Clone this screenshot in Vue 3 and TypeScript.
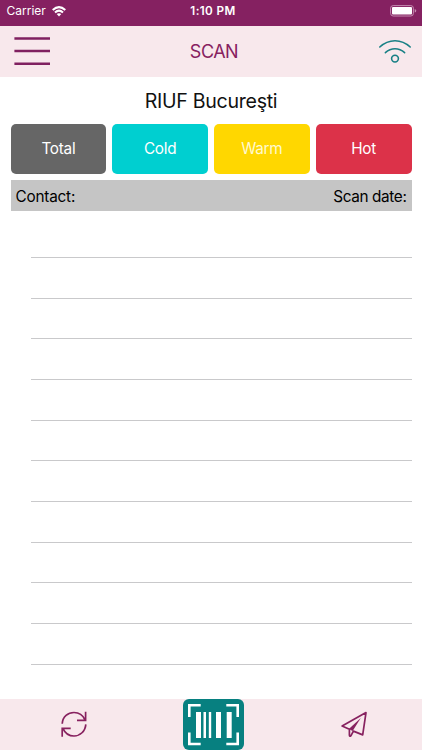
<script setup lang="ts">
interface Filter {
  label: string
  tone: string
}

const filters: Filter[] = [
  { label: 'Total', tone: 'total' },
  { label: 'Cold', tone: 'cold' },
  { label: 'Warm', tone: 'warm' },
  { label: 'Hot', tone: 'hot' },
]
const rowCount = 11
</script>

<template>
  <div class="screen">
    <div class="status">
      <div class="carrier">
        <span>Carrier</span>
        <svg width="14" height="11" viewBox="0 0 14 11" fill="none" stroke="#fff" stroke-width="2">
          <path d="M.7 4.1Q7-1.8 13.3 4.1M3 6.5Q7 2.8 11 6.5" />
          <path d="M4.7 8Q7 6.3 9.3 8L7 10.4Z" fill="#fff" stroke="none" />
        </svg>
      </div>
      <span class="clock">1:10 PM</span>
      <svg class="battery" width="27" height="12" viewBox="0 0 27 12">
        <rect x=".6" y=".6" width="22.8" height="10.4" rx="2.6" fill="none" stroke="#c58bb0" />
        <rect x="2" y="2" width="20" height="7.6" rx="1" fill="#fff" />
        <path d="M24.7 4Q26.3 4.4 26.3 5.8T24.7 7.6Z" fill="#c58bb0" />
      </svg>
    </div>

    <header class="header">
      <button class="menu" aria-label="Menu">
        <svg width="36" height="30" viewBox="0 0 36 30" stroke="#802060" stroke-width="2.5">
          <path d="M.4 2.4H36M.4 15.1H36M.4 27.8H36" />
        </svg>
      </button>
      <h1>SCAN</h1>
      <svg class="wifi" width="34" height="26" viewBox="0 0 34 26" fill="none" stroke="#188085" stroke-width="1.6" stroke-linecap="round">
        <path d="M1.8 9Q8.4 2.7 17 2.7T32.2 9M7.4 14.6Q11.7 10.8 17 10.8T26.6 14.6" />
        <circle cx="17" cy="20.6" r="3.4" />
      </svg>
    </header>

    <main class="content">
      <h2>RIUF Bucureşti</h2>
      <div class="filters">
        <button v-for="f in filters" :key="f.label" class="filter" :class="f.tone">{{ f.label }}</button>
      </div>
      <div class="list-head">
        <span>Contact:</span>
        <span class="date">Scan date:</span>
      </div>
      <ul class="rows">
        <li v-for="n in rowCount" :key="n" />
      </ul>
    </main>

    <footer class="footer">
      <button class="tab sync" aria-label="Refresh">
        <svg width="28" height="28" viewBox="0 0 28 28" fill="none" stroke="#87215f" stroke-width="1.7">
          <path d="M2.2 13.7C2.7 6.6 8 2.5 14 2.5C18.7 2.5 23 5.4 25 9.8M25.6 1.8V10.4H17" />
          <path d="M25.8 14.4C25.4 21.2 20 26 14 26C9.3 26 5 23 3 18.6M2.2 26.7V18.4H10.7" />
        </svg>
      </button>
      <button class="scan" aria-label="Scan barcode">
        <svg width="61" height="52" viewBox="0 0 61 52">
          <path d="M6.3 18V6.3H17.7M43.3 6.3H54.7V18M6.3 33.5V45H17.7M43.3 45H54.7V33.5" fill="none" stroke="#fff" stroke-width="2.6" />
          <path d="M13 13H18V39H13ZM20.5 13H23V39H20.5ZM25.8 13H28.2V39H25.8ZM33 13H38V39H33ZM43.7 13H48.7V39H43.7Z" fill="#fff" />
        </svg>
      </button>
      <button class="tab send" aria-label="Send">
        <svg width="28" height="28" viewBox="0 0 28 28" fill="none" stroke="#87215f" stroke-width="1.7" stroke-linejoin="round">
          <path d="M2.1 16L26 2.6L22.7 24.9L13.4 21.1L11 25.6Q9.6 27 9.4 25.1V19.2Z" />
          <path d="M8.8 19L20.8 8L12.6 21Z" fill="#87215f" stroke="none" />
        </svg>
      </button>
    </footer>
  </div>
</template>

<style>
body { margin: 0; overflow: hidden; }
</style>

<style scoped>
.screen {
  width: 422px;
  height: 750px;
  display: flex;
  flex-direction: column;
  background: #fff;
  color: #111;
  font-family: Inter, Roboto, "Liberation Sans", sans-serif;
}
button { border: 0; padding: 0; font: inherit; background: none; }
svg { display: block; }
h1, h2, ul { margin: 0; padding: 0; font-weight: 400; list-style: none; }
.status {
  box-sizing: border-box;
  height: 25.5px;
  flex: none;
  padding: 0 6.5px;
  display: grid;
  grid-template-columns: 1fr auto 1fr;
  align-items: center;
  background: #852161;
  color: #fff;
}
.carrier { display: flex; align-items: center; gap: 6px; font-size: 12px; line-height: 22px; padding-bottom: 3px; }
.clock { font-size: 11.7px; font-weight: 600; line-height: 22px; letter-spacing: .4px; padding: 0 0 3px 4px; }
.battery { justify-self: end; margin: 0 -1.5px 4px 0; }
.header {
  box-sizing: border-box;
  height: 51px;
  flex: none;
  padding: 0 10px 0 14px;
  display: grid;
  grid-template-columns: 1fr auto 1fr;
  align-items: center;
  background: #f8e8ec;
}
.header h1 { padding: 1px 0 0 2px; color: #87215f; font-size: 18px; line-height: 24px; letter-spacing: -.5px; }
.menu { width: 36px; }
.wifi { justify-self: end; }
.content { flex: 1; padding: 0 10.5px; }
.content h2 { height: 47px; font-size: 19.6px; line-height: 48px; text-align: center; letter-spacing: -.3px; }
.filters { display: grid; grid-template-columns: repeat(4, 1fr); gap: 6px; }
.filter { height: 50.8px; border-radius: 5px; color: #fff; font-size: 15.3px; letter-spacing: -.25px; }
.total { background: #666; }
.cold { background: #00cfd0; }
.warm { background: #ffd700; color: #fff9cf; }
.hot { background: #dc3249; }
.list-head { box-sizing: border-box; height: 30.5px; margin-top: 6px; padding: 2px 5px 0; display: flex; align-items: center; justify-content: space-between; background: #c5c5c5; color: #000; font-size: 15.3px; letter-spacing: -.2px; }
.date { letter-spacing: -.35px; }
.rows { padding: 6.5px 0 0 20.2px; }
.rows li { box-sizing: border-box; height: 40.7px; border-bottom: 1px solid #c9c9cb; }
.footer { box-sizing: border-box; height: 51.5px; flex: none; padding: 0 54px 0 60px; display: flex; align-items: center; justify-content: space-between; background: #f8e8ec; }
.tab { width: 28px; height: 28px; }
.scan { height: 51.5px; margin-right: .5px; border-radius: 6px; background: #078080; overflow: hidden; }
</style>
